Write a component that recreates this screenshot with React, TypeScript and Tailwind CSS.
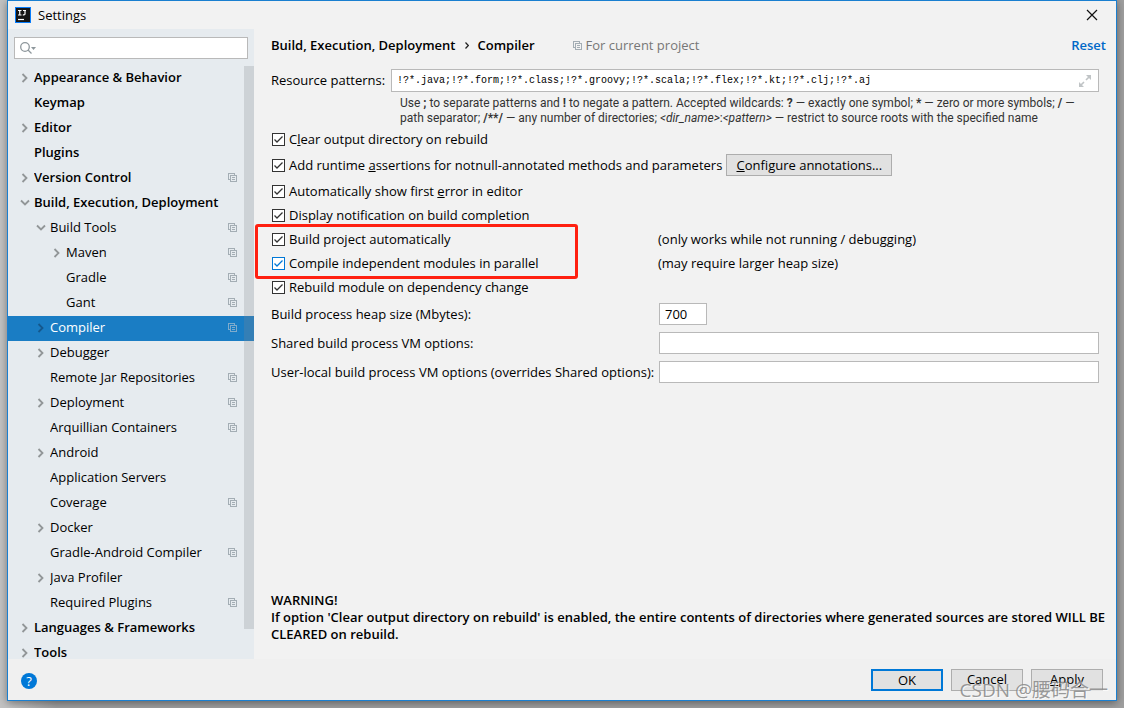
import React from "react";

type TreeItem = {
  label: string;
  level: 0 | 1 | 2;
  state?: "open" | "closed";
  project?: boolean;
  selected?: boolean;
};

const tree: TreeItem[] = [
  { label: "Appearance & Behavior", level: 0, state: "closed" },
  { label: "Keymap", level: 0 },
  { label: "Editor", level: 0, state: "closed" },
  { label: "Plugins", level: 0 },
  { label: "Version Control", level: 0, state: "closed", project: true },
  { label: "Build, Execution, Deployment", level: 0, state: "open" },
  { label: "Build Tools", level: 1, state: "open", project: true },
  { label: "Maven", level: 2, state: "closed", project: true },
  { label: "Gradle", level: 2, project: true },
  { label: "Gant", level: 2, project: true },
  { label: "Compiler", level: 1, state: "closed", project: true, selected: true },
  { label: "Debugger", level: 1, state: "closed" },
  { label: "Remote Jar Repositories", level: 1, project: true },
  { label: "Deployment", level: 1, state: "closed", project: true },
  { label: "Arquillian Containers", level: 1, project: true },
  { label: "Android", level: 1, state: "closed" },
  { label: "Application Servers", level: 1 },
  { label: "Coverage", level: 1, project: true },
  { label: "Docker", level: 1, state: "closed" },
  { label: "Gradle-Android Compiler", level: 1, project: true },
  { label: "Java Profiler", level: 1, state: "closed" },
  { label: "Required Plugins", level: 1, project: true },
  { label: "Languages & Frameworks", level: 0, state: "closed" },
  { label: "Tools", level: 0, state: "closed" },
];

const indents = ["pl-3", "pl-7", "pl-11"];

function ProjectIcon({ className = "" }: { className?: string }) {
  return (
    <svg className={`size-[9px] shrink-0 ${className}`} viewBox="0 0 9 9" fill="none" stroke="currentColor" shapeRendering="crispEdges" aria-hidden="true">
      <path d="M2 6.5H.5V.5H6.5V2" />
      <rect x="2.5" y="2.5" width="6" height="6" />
      <path d="M4 4.5H7M4 6.5H7" />
    </svg>
  );
}

function Arrow({ state, selected }: { state?: "open" | "closed"; selected?: boolean }) {
  return (
    <svg className={`mr-1 size-[10px] shrink-0 ${selected ? "text-[#15588c]" : "text-[#929698]"}`} viewBox="0 0 10 10" fill="none" stroke="currentColor" strokeWidth="1.8" aria-hidden="true">
      {state === "closed" && <path d="M2.5 1L6.5 5L2.5 9" />}
      {state === "open" && <path d="M1 2.5L5 6.5L9 2.5" />}
    </svg>
  );
}

function TreeRow({ item }: { item: TreeItem }) {
  return (
    <li>
      <button
        type="button"
        className={`flex h-[25px] w-full items-center pr-[17px] pb-0.5 text-left ${indents[item.level]} ${item.level === 0 ? "font-semibold" : ""} ${item.selected ? "bg-[#1a7dc4] text-white" : ""}`}
      >
        <Arrow state={item.state} selected={item.selected} />
        <span className="flex-1 truncate">{item.label}</span>
        {item.project && <ProjectIcon className={item.selected ? "text-[#7fabcc]" : "text-[#a3adb4]"} />}
      </button>
    </li>
  );
}

function Check({ id, children, focused, className = "h-6" }: { id: string; children: React.ReactNode; focused?: boolean; className?: string }) {
  return (
    <div className={`flex items-center ${className}`}>
      <span className="mr-1 ml-px grid size-[13px] shrink-0">
        <input
          id={id}
          type="checkbox"
          defaultChecked
          className={`peer col-start-1 row-start-1 size-[13px] appearance-none border bg-white ${focused ? "border-[#0078d7]" : "border-[#333333]"}`}
        />
        <svg
          className={`pointer-events-none invisible col-start-1 row-start-1 size-[13px] peer-checked:visible ${focused ? "text-[#0078d7]" : "text-[#333333]"}`}
          viewBox="0 0 13 13"
          fill="none"
          stroke="currentColor"
          strokeWidth="1.3"
          aria-hidden="true"
        >
          <path d="M2.5 6.5L5 9L10.5 3.5" />
        </svg>
      </span>
      <label htmlFor={id} className="whitespace-nowrap">{children}</label>
    </div>
  );
}

const field = "min-w-0 border border-[#b9b9b9] bg-white px-[5px] outline-none";
const pushButton = "h-[22px] bg-[#e1e1e1] text-center";

export default function App() {
  return (
    <div className="relative flex h-screen bg-linear-to-r from-[#c2c2c2] from-1% to-[#9f9f9f] to-5% px-[7px] pb-[7px] font-['Open_Sans','Noto_Sans_CJK_SC',sans-serif] text-[13px] leading-[17px] text-black">
      <div className="flex min-w-0 flex-1 flex-col border border-[#1a7fd0] bg-[#f2f2f2] shadow-[0_2px_8px_rgba(0,0,0,0.4)]">
        <header className="flex h-7 shrink-0 items-center pr-[18px] pl-[7px]">
          <svg className="size-4" viewBox="0 0 16 16" aria-hidden="true">
            <rect width="16" height="16" fill="#087cfa" />
            <rect x="1" y="1" width="14" height="14" fill="#161616" />
            <path d="M3 3.5H6.5M4.75 3.5V8M3 8H6.5M8 3.5H11M10 3.5V7Q10 8.2 7.8 7.8" fill="none" stroke="#fff" strokeWidth="1.2" />
            <path d="M3 12.5H9" stroke="#fff" strokeWidth="1.2" />
          </svg>
          <h1 className="ml-[7px] flex-1">Settings</h1>
          <button type="button" aria-label="Close">
            <svg className="size-3" viewBox="0 0 12 12" fill="none" stroke="#111" strokeWidth="1.2">
              <path d="M1 1L11 11M11 1L1 11" />
            </svg>
          </button>
        </header>

        <div className="flex min-h-0 flex-1">
          <nav className="flex w-[246px] shrink-0 flex-col bg-[#e6ebef]">
            <div className="mx-1.5 mt-2 mb-[7px] flex h-[22px] shrink-0 items-center border border-[#b9b9b9] bg-white pl-[5px]">
              <svg className="h-3 w-4 shrink-0" viewBox="0 0 16 12" fill="none" stroke="#8e979c" strokeWidth="1.3" aria-hidden="true">
                <circle cx="5" cy="5" r="4.3" />
                <path d="M8 8L11.5 11.5" />
                <path d="M11 5H16L13.5 8Z" fill="#8e979c" stroke="none" />
              </svg>
              <input aria-label="Search settings" className="min-w-0 flex-1 bg-transparent px-1 outline-none" />
            </div>
            <div className="relative min-h-0 flex-1 overflow-hidden">
              <ul>
                {tree.map((item) => (
                  <TreeRow key={item.label} item={item} />
                ))}
              </ul>
              <div className="absolute top-0 right-0 h-[95%] w-[10px] bg-[#85888c]/25" />
            </div>
          </nav>

          <main className="flex min-w-0 flex-1 flex-col pr-[17px] pl-[17px]">
            <div className="flex h-8 shrink-0 items-center font-semibold">
              <span>Build, Execution, Deployment</span>
              <svg className="mx-[9px] h-[7px] w-1" viewBox="0 0 4 7" fill="none" stroke="#222" strokeWidth="1.2" aria-hidden="true">
                <path d="M.5 .5L3.3 3.5L.5 6.5" />
              </svg>
              <h2>Compiler</h2>
              <ProjectIcon className="mr-1 ml-[38px] text-[#a3adb4]" />
              <span className="flex-1 font-normal text-[#777777]">For current project</span>
              <a href="#reset" className="-mr-[7px] text-[#0068c8]">Reset</a>
            </div>

            <div className="mt-2 flex items-center">
              <label htmlFor="patterns" className="w-[120px] shrink-0">Resource patterns:</label>
              <div className="flex h-[23px] min-w-0 flex-1 items-center border border-[#b9b9b9] bg-white pr-[7px] pl-[5px]">
                <input
                  id="patterns"
                  defaultValue="!?*.java;!?*.form;!?*.class;!?*.groovy;!?*.scala;!?*.flex;!?*.kt;!?*.clj;!?*.aj"
                  className="min-w-0 flex-1 bg-transparent font-['Liberation_Mono',monospace] text-[10px] outline-none"
                />
                <svg className="size-3" viewBox="0 0 12 12" fill="#c0c4c6" stroke="#c0c4c6" aria-hidden="true">
                  <path d="M7 0H12V5ZM0 7V12H5Z" stroke="none" />
                  <path d="M7 5L10 2M2 10L5 7" strokeWidth="1.6" />
                </svg>
              </div>
            </div>
            <p className="mt-1 ml-[129px] font-['Roboto',sans-serif] text-[12px] leading-[15px] text-[#333333]">
              Use <b>;</b> to separate patterns and <b>!</b> to negate a pattern. Accepted wildcards: <b>?</b> — exactly one symbol; <b>*</b> — zero or more symbols; <b>/</b> —<br />
              path separator; <b>/**/</b> — any number of directories; <i>&lt;dir_name&gt;</i>:<i>&lt;pattern&gt;</i> — restrict to source roots with the specified name
            </p>

            <Check id="clear" className="mt-px h-6">C<u>l</u>ear output directory on rebuild</Check>
            <div className="flex h-7 items-center">
              <Check id="assertions">Add runtime <u>a</u>ssertions for notnull-annotated methods and parameters</Check>
              <button type="button" className={`${pushButton} ml-1 w-[166px] border border-[#adadad]`}><u>C</u>onfigure annotations...</button>
            </div>
            <Check id="first-error">Automatically show first <u>e</u>rror in editor</Check>
            <Check id="notify">Display notification on build completion</Check>
            <div className="relative">
              <div className="flex">
                <Check id="auto" className="h-6 w-[387px]">Build project automatically</Check>
                <span className="leading-6">(only works while not running / debugging)</span>
              </div>
              <div className="flex">
                <Check id="parallel" focused className="h-6 w-[387px]">Compile independent modules in parallel</Check>
                <span className="leading-6">(may require larger heap size)</span>
              </div>
              <div className="pointer-events-none absolute -top-[3px] -bottom-1 -left-4 w-[323px] rounded-[3px] border-3 border-[#ff2010]" />
            </div>
            <Check id="rebuild">Rebuild module on dependency change</Check>

            <div className="mt-1 grid grid-cols-[388px_minmax(0,1fr)] items-center gap-y-[7px]">
              <label htmlFor="heap">Build process heap size (Mbytes):</label>
              <input id="heap" defaultValue="700" className={`${field} h-[22px] w-12`} />
              <label htmlFor="shared">Shared build process VM options:</label>
              <input id="shared" className={`${field} h-[22px]`} />
              <label htmlFor="local" className="whitespace-nowrap">User-local build process VM options (overrides Shared options):</label>
              <input id="local" className={`${field} h-[22px]`} />
            </div>

            <p className="-mr-4 mt-auto mb-4 font-semibold">
              WARNING!<br />
              If option 'Clear output directory on rebuild' is enabled, the entire contents of directories where generated sources are stored WILL BE<br />
              CLEARED on rebuild.
            </p>
          </main>
        </div>

        <footer className="flex h-[41px] shrink-0 items-center gap-2 bg-[#f0f0f0] pr-[13px] pl-[13px]">
          <button type="button" aria-label="Help" className="mr-auto mt-0.5 size-4 rounded-full bg-[#0078d7] text-[13px] leading-4 text-white">?</button>
          <button type="button" className={`${pushButton} w-[72px] border-2 border-[#0078d7] leading-4`}>OK</button>
          <button type="button" className={`${pushButton} w-[72px] border border-[#adadad]`}>Cancel</button>
          <button type="button" className={`${pushButton} w-[72px] border border-[#adadad]`}><u>A</u>pply</button>
        </footer>
      </div>
      <div className="pointer-events-none absolute right-4 bottom-[6px] text-[19px] leading-6 whitespace-nowrap text-[#808080]/80 [text-shadow:1px_1px_0_#ffffffb0]">
        CSDN @腰码合一
      </div>
    </div>
  );
}
